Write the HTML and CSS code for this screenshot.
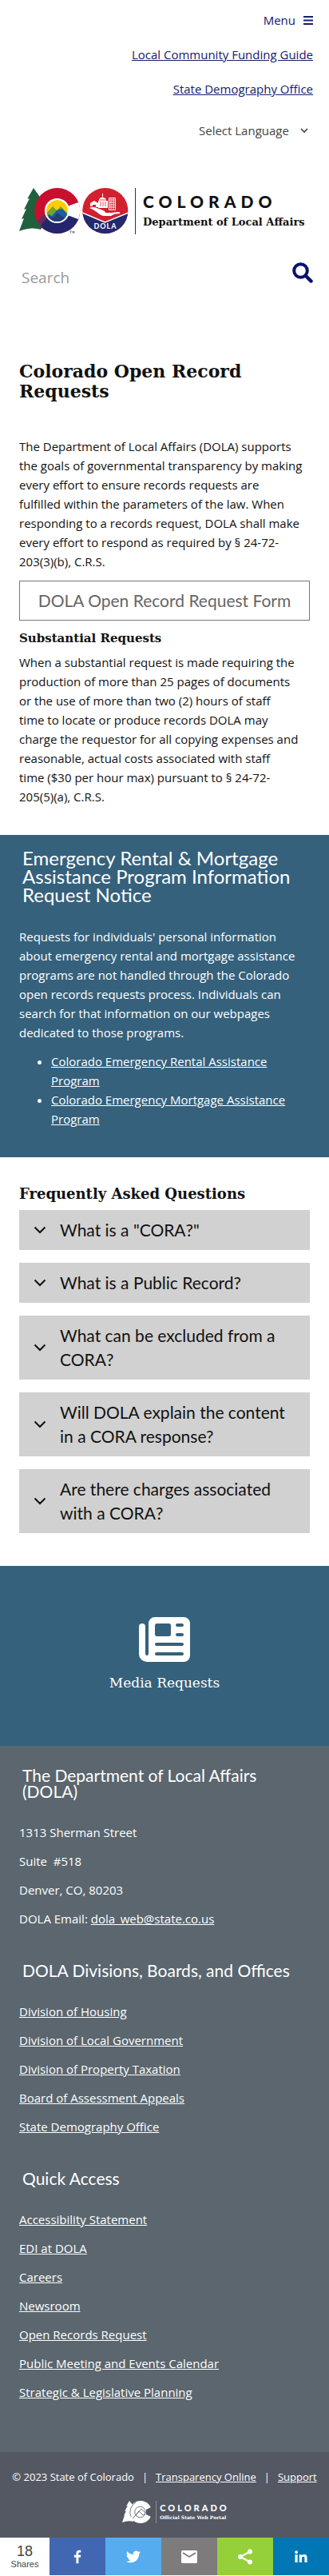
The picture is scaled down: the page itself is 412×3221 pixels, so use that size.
FILE: index.html
```
<!DOCTYPE html>
<html lang="en">
<head>
<meta charset="utf-8">
<meta name="viewport" content="width=device-width, initial-scale=1">
<title>Colorado Open Record Requests | Department of Local Affairs</title>
<link rel="stylesheet" href="styles.css">
</head>
<body>
<header class="site-header">
  <nav class="top-nav" aria-label="Utility">
    <button type="button" class="menu-button">Menu
      <svg width="12" height="11" viewBox="0 0 12 11" aria-hidden="true"><path d="M0 1h12M0 5.500h12M0 10h12" stroke="currentColor" stroke-width="2"/></svg>
    </button>
    <a href="#">Local Community Funding Guide</a>
    <a href="#">State Demography Office</a>
  </nav>
  <div class="language">
    <select aria-label="Select Language"><option>Select Language</option></select>
    <svg width="10" height="7" viewBox="0 0 10 7" aria-hidden="true"><path d="M1 1l4 4 4-4" fill="none" stroke="currentColor" stroke-width="1.600"/></svg>
  </div>
  <a class="logo" href="#" aria-label="Colorado Department of Local Affairs">
    <svg class="logo-mark" width="138" height="58" viewBox="0 0 138 58" aria-hidden="true">
      <defs>
        <clipPath id="ring"><circle cx="47.700" cy="28.500" r="28.500"/></clipPath>
        <clipPath id="disc"><circle cx="47.500" cy="28.500" r="13.300"/></clipPath>
        <clipPath id="badge"><circle cx="107.800" cy="28.500" r="28.500"/></clipPath>
      </defs>
      <path fill="#20603d" d="M18 0l-8 14 3-1-7 14 3-1-6 13 3-1L0 54q15-6 27-2l8-12V24z"/>
      <g clip-path="url(#ring)">
        <path fill="#c8102e" d="M18 0h60v58H18z"/>
        <path fill="#6b2a5c" d="M18 46l14-14 16 6-12 20H18z"/>
        <path fill="#23266b" d="M28 46l8-10 42-2v24H25z"/>
        <path fill="#fff" d="M79 16L58 24v9l21 8z"/>
      </g>
      <circle cx="47.500" cy="28.500" r="15.600" fill="#fff"/>
      <g clip-path="url(#disc)">
        <path fill="#ffcd00" d="M33 14h30v30H33z"/>
        <path fill="#78a22f" d="M32 34l10-11 5 5 5-5 11 12v9H32z"/>
        <path fill="#1b5f9e" d="M32 37l5-4 4 2 6-7 7-2 9 9v10H32z"/>
        <path fill="#263a7d" d="M32 38l6-2 5 1 5-6 6 5 9 2v8H32z"/>
      </g>
      <path d="M63 54h3M64.500 54v3M67 57v-3l1 2 1-2v3" stroke="#333" stroke-width=".5" fill="none"/>
      <g clip-path="url(#badge)">
        <path fill="#d2202f" d="M79 0h58v58H79z"/>
        <path fill="#23296f" d="M79 31l28.500 12.500L137 31v27H79z"/>
        <path fill="none" stroke="#fff" stroke-width="1.500" d="M79 31l28.500 12L137 31"/>
      </g>
      <path fill="#fff" d="M88 25q5-2 9 0l8 3q3 1 3 3h7l9-1q3 0 2 2-7 0-11 3H105q-4-1-8-5-4-3-9-5z"/>
      <path fill="#fff" d="M89 23v-4l5-3 5 3v5h-3v-3h-4v2zM100 14q4-5 9-0v2h2v9h-12v-9h1zM104 7h1v4h-1z"/>
      <path stroke="#d2202f" stroke-width=".8" d="M101 15h8M102 17v6M105 17v6M108 17v6"/>
      <path fill="none" stroke="#fff" stroke-width=".9" d="M112.500 12.500h8v15h-8zM115 12v15M118 12v15M112 15h8M112 18h8M112 21h8M112 24h8"/>
      <text class="badge-text" x="108" y="51" text-anchor="middle">DOLA</text>
    </svg>
    <span class="logo-words">
      <span class="logo-state">COLORADO</span>
      <span class="logo-dept">Department of Local Affairs</span>
    </span>
  </a>
  <form class="search" role="search">
    <input type="search" placeholder="Search" aria-label="Search">
    <button type="button" aria-label="Submit search">
      <svg width="26" height="26" viewBox="0 0 26 26" aria-hidden="true"><circle cx="10.500" cy="10.500" r="8.300" fill="none" stroke="currentColor" stroke-width="4"/><path d="M17 17l6.500 6.500" stroke="currentColor" stroke-width="4.500" stroke-linecap="round"/></svg>
    </button>
  </form>
</header>

<main>
  <section class="intro">
    <h1>Colorado Open Record Requests</h1>
    <p>The Department of Local Affairs (DOLA) supports the goals of governmental transparency by making every effort to ensure records requests are<br>fulfilled within the parameters of the law. When<br>responding to a records request, DOLA shall make<br>every effort to respond as required by § 24-72-<br>203(3)(b), C.R.S.</p>
    <a class="form-link" href="#">DOLA Open Record Request Form</a>
    <h2>Substantial Requests</h2>
    <p>When a substantial request is made requiring the production of more than 25 pages of documents<br>or the use of more than two (2) hours of staff<br>time to locate or produce records DOLA may<br>charge the requestor for all copying expenses and<br>reasonable, actual costs associated with staff<br>time ($30 per hour max) pursuant to § 24-72-<br>205(5)(a), C.R.S.</p>
  </section>

  <section class="notice">
    <h2>Emergency Rental &amp; Mortgage Assistance Program Information Request Notice</h2>
    <p>Requests for individuals' personal information about emergency rental and mortgage assistance programs are not handled through the Colorado open records requests process. Individuals can search for that information on our webpages dedicated to those programs.</p>
    <ul>
      <li><a href="#">Colorado Emergency Rental Assistance Program</a></li>
      <li><a href="#">Colorado Emergency Mortgage Assistance Program</a></li>
    </ul>
  </section>

  <section class="faq">
    <h2>Frequently Asked Questions</h2>
    <div class="faq-list">
      <h3><button type="button" aria-expanded="false"><svg class="chevron" width="16" height="10" viewBox="0 0 16 10" aria-hidden="true"><path d="M1.500 1.500L8 8l6.500-6.500"/></svg><span>What is a "CORA?"</span></button></h3>
      <h3><button type="button" aria-expanded="false"><svg class="chevron" width="16" height="10" viewBox="0 0 16 10" aria-hidden="true"><path d="M1.500 1.500L8 8l6.500-6.500"/></svg><span>What is a Public Record?</span></button></h3>
      <h3><button type="button" aria-expanded="false"><svg class="chevron" width="16" height="10" viewBox="0 0 16 10" aria-hidden="true"><path d="M1.500 1.500L8 8l6.500-6.500"/></svg><span>What can be excluded from a CORA?</span></button></h3>
      <h3><button type="button" aria-expanded="false"><svg class="chevron" width="16" height="10" viewBox="0 0 16 10" aria-hidden="true"><path d="M1.500 1.500L8 8l6.500-6.500"/></svg><span>Will DOLA explain the content in a CORA response?</span></button></h3>
      <h3><button type="button" aria-expanded="false"><svg class="chevron" width="16" height="10" viewBox="0 0 16 10" aria-hidden="true"><path d="M1.500 1.500L8 8l6.500-6.500"/></svg><span>Are there charges associated with a CORA?</span></button></h3>
    </div>
  </section>

  <section class="media">
    <a href="#">
      <svg width="64" height="56" viewBox="0 0 64 56" aria-hidden="true">
        <path fill="#fff" fill-rule="evenodd" d="M20 0h36a8 8 0 0 1 8 8v40a8 8 0 0 1-8 8H10A10 10 0 0 1 0 46V12a4 4 0 0 1 8 0v34a2 2 0 0 0 4 0V8a8 8 0 0 1 8-8zM22.500 8A2.500 2.500 0 0 0 20 10.500v11A2.500 2.500 0 0 0 22.500 24h15a2.500 2.500 0 0 0 2.500-2.500v-11A2.500 2.500 0 0 0 37.500 8zM48 8a2 2 0 0 0 0 4h6a2 2 0 0 0 0-4zM48 20a2 2 0 0 0 0 4h6a2 2 0 0 0 0-4zM22 32a2 2 0 0 0 0 4h32a2 2 0 0 0 0-4zM22 44a2 2 0 0 0 0 4h32a2 2 0 0 0 0-4z"/>
      </svg>
      <span>Media Requests</span>
    </a>
  </section>
</main>

<footer>
  <div class="footer-main">
    <section>
      <h2>The Department of Local Affairs (DOLA)</h2>
      <div class="footer-lines">
        <p>1313 Sherman Street</p>
        <p>Suite &nbsp;#518</p>
        <p>Denver, CO, 80203</p>
        <p>DOLA Email: <a href="#">dola_web@state.co.us</a></p>
      </div>
    </section>
    <section>
      <h2>DOLA Divisions, Boards, and Offices</h2>
      <div class="footer-lines">
        <p><a href="#">Division of Housing</a></p>
        <p><a href="#">Division of Local Government</a></p>
        <p><a href="#">Division of Property Taxation</a></p>
        <p><a href="#">Board of Assessment Appeals</a></p>
        <p><a href="#">State Demography Office</a></p>
      </div>
    </section>
    <section>
      <h2>Quick Access</h2>
      <div class="footer-lines">
        <p><a href="#">Accessibility Statement</a></p>
        <p><a href="#">EDI at DOLA</a></p>
        <p><a href="#">Careers</a></p>
        <p><a href="#">Newsroom</a></p>
        <p><a href="#">Open Records Request</a></p>
        <p><a href="#">Public Meeting and Events Calendar</a></p>
        <p><a href="#">Strategic &amp; Legislative Planning</a></p>
      </div>
    </section>
  </div>
  <div class="footer-legal">
    <p><span>© 2023 State of Colorado</span><span>|</span><a href="#">Transparency Online</a><span>|</span><a href="#">Support</a></p>
    <a class="portal" href="#" aria-label="Colorado Official State Web Portal">
      <svg width="37" height="28" viewBox="0 0 37 28" aria-hidden="true">
        <path fill="#fff" d="M9 0L5 7l2-1-4 7 2-1-3 7 1-1-3 9q8-3 14-1V6z"/>
        <circle cx="23" cy="14" r="14" fill="#fff"/>
        <path fill="#545863" d="M38 7l-8 4v6l8 4z"/>
        <circle cx="22.500" cy="14" r="6.800" fill="#fff" stroke="#545863" stroke-width=".8"/>
        <path fill="none" stroke="#545863" stroke-width=".8" d="M17 2a14 14 0 0 0-6 18M13 22l11-12 5 5M17 18l4-5 5 5 3-2"/>
      </svg>
      <span class="portal-words">
        <span class="portal-state">COLORADO</span>
        <span class="portal-name">Official State Web Portal</span>
      </span>
    </a>
  </div>
</footer>

<aside class="share-bar" aria-label="Share">
  <div class="share-count"><strong>18</strong><span>Shares</span></div>
  <button type="button" class="facebook" aria-label="Share on Facebook"><svg width="24" height="24" viewBox="0 0 32 32" aria-hidden="true"><path fill="#fff" d="M17.800 27V17h3.400l.5-4h-3.900v-2.400c0-1.100.3-1.900 1.900-1.900h2V5.200C21.400 5.100 20.200 5 18.900 5c-3 0-5 1.800-5 5.100V13h-3.400v4h3.400v10z"/></svg></button>
  <button type="button" class="twitter" aria-label="Share on Twitter"><svg width="24" height="24" viewBox="0 0 32 32" aria-hidden="true"><path fill="#fff" d="M28 8.560a9.900 9.900 0 0 1-2.830.78 4.940 4.940 0 0 0 2.170-2.730 9.900 9.900 0 0 1-3.130 1.200 4.920 4.920 0 0 0-8.390 4.480A13.980 13.980 0 0 1 5.670 7.150a4.930 4.930 0 0 0 1.520 6.570 4.900 4.900 0 0 1-2.230-.61v.06a4.930 4.930 0 0 0 3.950 4.830 4.900 4.900 0 0 1-2.220.08 4.930 4.930 0 0 0 4.600 3.420A9.880 9.880 0 0 1 4 23.540a13.940 13.940 0 0 0 7.550 2.210c9.050 0 14-7.500 14-14v-.64A10 10 0 0 0 28 8.560z"/></svg></button>
  <button type="button" class="email" aria-label="Share by email"><svg width="20" height="16" viewBox="0 0 20 16" aria-hidden="true"><rect width="20" height="16" rx="1.500" fill="#fff"/><path d="M2 3l8 5 8-5" fill="none" stroke="#7d7b7b" stroke-width="1.800"/></svg></button>
  <button type="button" class="sharethis" aria-label="More sharing options"><svg width="20" height="20" viewBox="0 0 20 20" aria-hidden="true"><path d="M16 3.500L4 10l12 6.500" fill="none" stroke="#fff" stroke-width="2"/><circle cx="16" cy="3.500" r="3" fill="#fff"/><circle cx="4" cy="10" r="3" fill="#fff"/><circle cx="16" cy="16.500" r="3" fill="#fff"/></svg></button>
  <button type="button" class="linkedin" aria-label="Share on LinkedIn"><svg width="16" height="16" viewBox="0 0 16 16" aria-hidden="true"><path fill="#fff" d="M.5 5.200h3.200V15H.5zM2.100.3a1.900 1.900 0 1 1 0 3.800 1.900 1.900 0 0 1 0-3.800zM5.800 5.200h3v1.400c.5-.9 1.600-1.700 3-1.700 3.200 0 3.800 2 3.800 4.800V15h-3.200v-4.700c0-1.200 0-2.600-1.600-2.600S9 8.900 9 10.200V15H5.800z"/></svg></button>
</aside>
</body>
</html>
```
FILE: styles.css
```
* { box-sizing: border-box; }

body {
  margin: 0;
  background: #fff;
  color: #111;
  font-family: "Trebuchet MS", "Open Sans", sans-serif;
  font-size: 15px;
  line-height: 24px;
}

h1, h2, h3, p, ul { margin: 0; }
button, select, input { font: inherit; border: 0; background: none; padding: 0; margin: 0; }
svg { display: block; flex: none; }

/* Header */
.site-header { padding: 13px 20px 0 24px; }
.top-nav { display: flex; flex-direction: column; align-items: flex-end; gap: 19px; color: #14206b; }
.top-nav a { color: inherit; }
.menu-button { display: flex; align-items: center; gap: 10px; color: inherit; }
.language { display: flex; align-items: center; justify-content: flex-end; gap: 14px; margin-top: 28px; padding-right: 6px; color: #444; }
.language select { appearance: none; color: inherit; height: 24px; }

.logo { display: flex; align-items: stretch; gap: 7px; margin-top: 60px; color: #111; text-decoration: none; }
.badge-text { fill: #fff; font-family: Lato, sans-serif; font-weight: 700; font-size: 9px; letter-spacing: 1px; }
.logo-words { display: flex; flex-direction: column; justify-content: center; gap: 8px; border-left: 1px solid #333; padding-left: 9px; white-space: nowrap; }
.logo-state { font-family: Lato, sans-serif; font-weight: 900; font-size: 21px; line-height: 20px; letter-spacing: 6px; }
.logo-dept { font-family: "Museo Slab", "DejaVu Serif", serif; font-weight: 700; font-size: 13px; line-height: 16px; }

.search { display: flex; align-items: flex-start; justify-content: space-between; margin-top: 35px; }
.search input { flex: 1; min-width: 0; height: 38px; padding-left: 3px; font-size: 19px; color: #333; }
.search input::placeholder { color: #999; opacity: 1; }
.search button { color: #0a1172; }

/* Intro */
.intro { padding: 86px 24px 36px; }
h1, .intro h2, .faq h2 { font-family: "Museo Slab", "DejaVu Serif", serif; font-weight: 700; color: #111; }
h1 { font-size: 22px; line-height: 25px; margin-bottom: 44px; }
.form-link {
  display: block;
  margin: 12px 0 10px;
  border: 1px solid #777;
  padding: 9px 0;
  color: #666;
  font-family: "Museo Sans", Lato, sans-serif;
  font-size: 21px;
  line-height: 30px;
  text-align: center;
  text-decoration: none;
}
.intro h2 { font-size: 15px; line-height: 24px; margin-bottom: 6px; }

/* Notice */
.notice { padding: 17px 24px 36px; background: #35617c; color: #fff; }
.notice h2 { margin: 0 0 29px 4px; font-family: "Museo Sans", Lato, sans-serif; font-weight: 400; font-size: 24px; line-height: 23px; }
.notice a { color: inherit; }
.notice ul { margin-top: 12px; padding-left: 40px; }

/* FAQ */
.faq { padding: 34px 24px 41px; }
.faq h2 { font-size: 18px; line-height: 24px; margin-bottom: 8px; }
.faq-list { display: flex; flex-direction: column; gap: 16px; }
.faq-list button {
  display: flex;
  align-items: center;
  gap: 17px;
  width: 100%;
  padding: 10px 24px 10px 18px;
  background: #d1d1d1;
  color: #111;
  font-family: "Museo Sans", Lato, sans-serif;
  font-weight: 400;
  font-size: 21px;
  line-height: 30px;
  text-align: left;
}
.chevron path { fill: none; stroke: #111; stroke-width: 2; }

/* Media */
.media { padding: 64px 24px 67px; background: #35617c; }
.media a { display: flex; flex-direction: column; align-items: center; gap: 14px; color: #fff; font-family: "Museo Slab", "DejaVu Serif", serif; font-size: 17px; line-height: 24px; text-decoration: none; }

/* Footer */
footer { color: #fff; }
footer a { color: inherit; }
.footer-main { display: flex; flex-direction: column; gap: 43px; padding: 27px 24px 63px; background: #5b666e; }
.footer-main h2 { margin: 0 0 29px 4px; font-family: "Museo Sans", Lato, sans-serif; font-weight: 400; font-size: 21px; line-height: 20px; }
.footer-lines { display: flex; flex-direction: column; gap: 12px; }
.footer-legal { padding: 19px 16px 18px; background: #545863; }
.footer-legal p { display: flex; justify-content: center; gap: 10px; font-size: 13px; white-space: nowrap; }
.portal { display: flex; justify-content: center; gap: 5px; margin-top: 18px; padding-left: 28px; text-decoration: none; }
.portal-words { display: flex; flex-direction: column; justify-content: center; border-left: 1px solid #888b93; padding-left: 4px; white-space: nowrap; }
.portal-state { font-family: Lato, sans-serif; font-weight: 900; font-size: 11px; line-height: 13px; letter-spacing: 3px; }
.portal-name { font-family: "Museo Slab", "DejaVu Serif", serif; font-weight: 700; font-size: 6px; line-height: 12px; }

/* Share bar */
.share-bar { display: grid; grid-template-columns: 62px repeat(5, 1fr); height: 47px; background: #fff; }
.share-bar button { display: flex; align-items: center; justify-content: center; }
.share-count { display: flex; flex-direction: column; align-items: center; justify-content: center; color: #444; font-family: "Liberation Sans", sans-serif; font-size: 11px; line-height: 13px; }
.share-count strong { font-weight: 400; font-size: 18px; line-height: 20px; }
.facebook { background: #4267b2; }
.twitter { background: #55acee; }
.email { background: #7d7b7b; }
.sharethis { background: #95d03a; }
.linkedin { background: #0077b5; }
```
